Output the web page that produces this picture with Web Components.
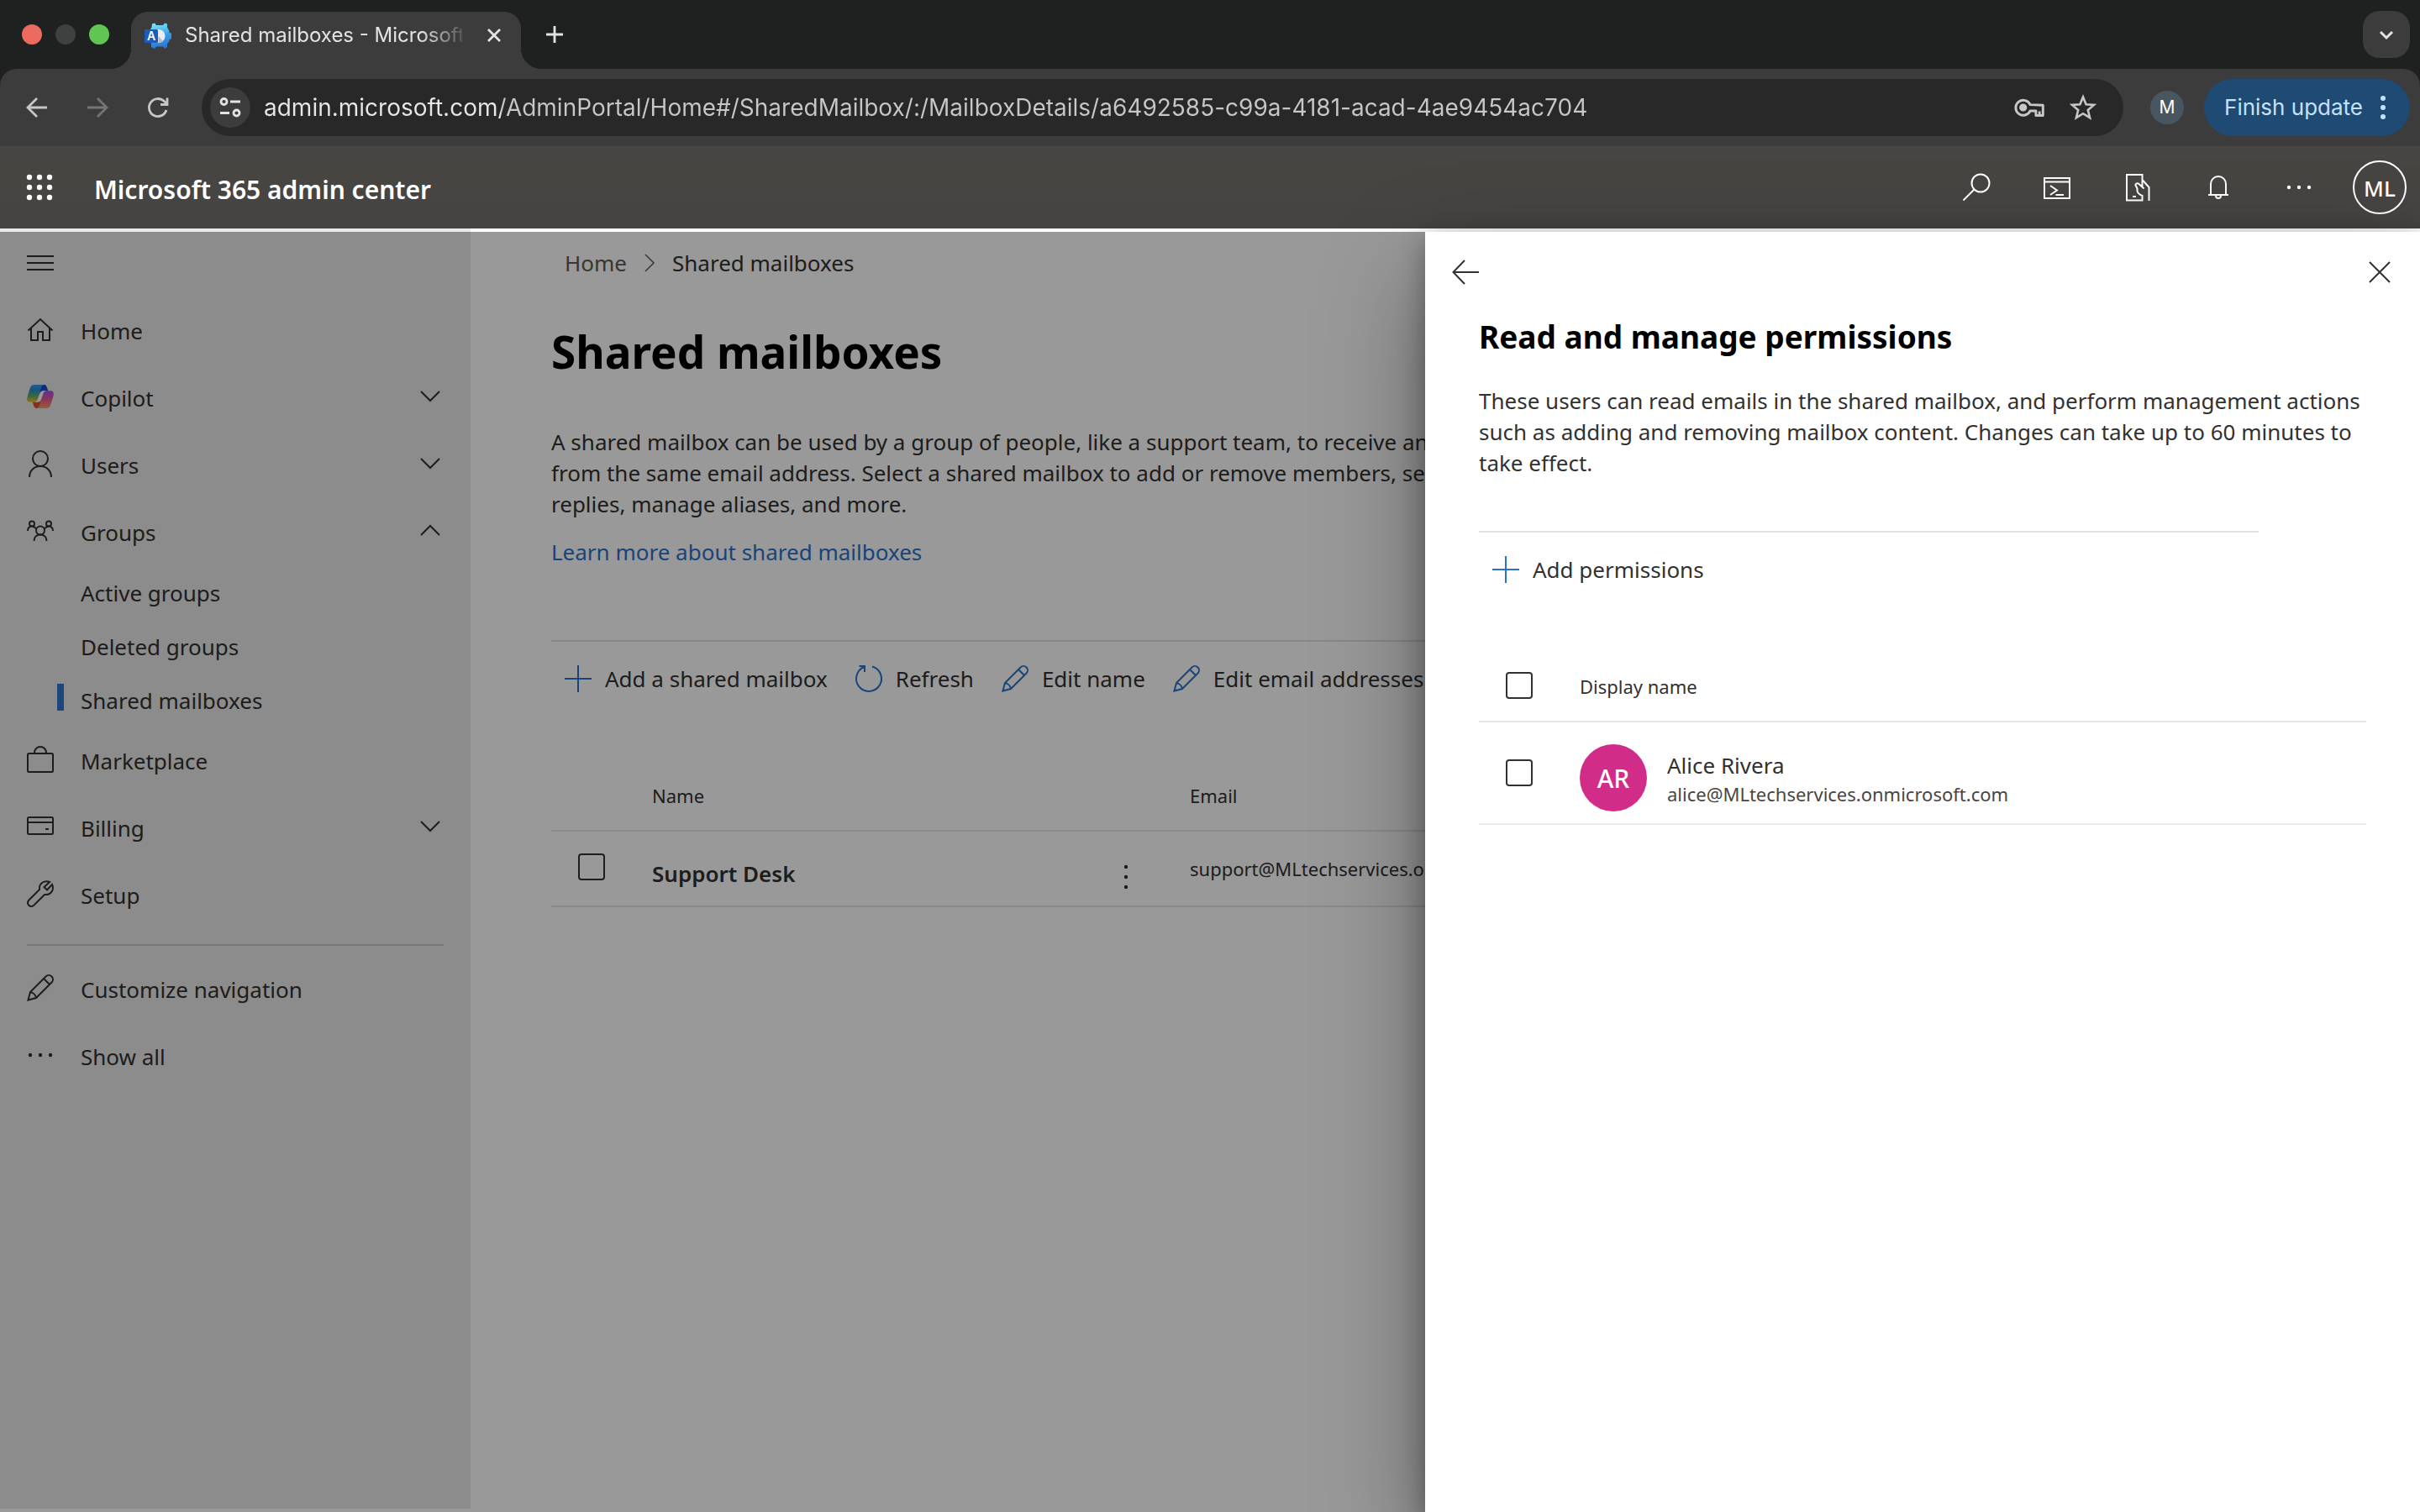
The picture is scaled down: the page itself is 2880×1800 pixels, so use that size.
<!DOCTYPE html>
<html lang="en">
<head>
<meta charset="utf-8">
<title>Shared mailboxes - Microsoft 365 admin center</title>
<style>
  html, body { margin: 0; height: 100%; }
  body {
    --ui: "Inter", sans-serif;
    --text: 26px;
    --small: 22px;
    --line: 37px;
    --ink: #323130;
    --accent: #2b72cc;
    font-family: "Noto Sans", "Open Sans", sans-serif;
    font-size: var(--text);
    line-height: var(--line);
    color: var(--ink);
    background: #1f2120;
    overflow: hidden;
  }
</style>
</head>
<body>
<app-window></app-window>

<script>
const ICONS = {
  menu: '<path d="M0 8H32M0 16H32M0 24H32"/>',
  home: '<path d="M1.5 17.5L16 4l14.500 13.500M5 14.500V29H13V19H19V29H27V14.500"/>',
  copilot: `<defs>
      <linearGradient id="a" x1="0" y1="0" x2="0" y2="1"><stop offset="0" stop-color="#2f9ff0"/><stop offset=".3" stop-color="#2b8bd6"/><stop offset=".65" stop-color="#5fae62"/><stop offset="1" stop-color="#f2c81e"/></linearGradient>
      <linearGradient id="b" x1="0" y1="0" x2="0" y2="1"><stop offset="0" stop-color="#a44cf0"/><stop offset=".5" stop-color="#e85a94"/><stop offset="1" stop-color="#ff9a58"/></linearGradient>
      <linearGradient id="c" x1="0" y1="0" x2="1" y2="1"><stop offset="0" stop-color="#1c3fd0"/><stop offset="1" stop-color="#1858c8"/></linearGradient></defs>
    <g stroke="none"><path fill="url(#c)" d="M14 2h6c3 0 3.600 2 4.500 5l1 2.500h-7L13 16z"/>
    <path fill="#e0502c" d="M18 30h-6c-3 0-3.600-2-4.500-5l-1-2.500h7L19 16z"/>
    <path fill="url(#a)" d="M9 2h11.500C18.500 2.500 17.500 4 16.800 6.500L13 19c-.8 2.600-2 3.800-4.500 3.800H4C.8 22.800-.4 20.500.4 17L3.600 6.500C4.500 3.500 6 2 9 2z"/>
    <path fill="url(#b)" d="M23 30H11.500c2-.5 3-2 3.700-4.500L19 13c.8-2.600 2-3.800 4.500-3.800H28c3.200 0 4.400 2.300 3.600 5.800L28.400 25.500C27.500 28.500 26 30 23 30z"/>
    <path fill="#fff" d="M20.500 9.300h2.500c-2 .4-3.200 1.500-4 4l-2 6.200c-.8 2.300-2 3.200-5.500 3.300H9c2.200-.3 3.300-1.500 4-3.800l2.200-6.500c.9-2.400 2.300-3.200 5.300-3.200z"/></g>`,
  user: '<circle cx="16" cy="10" r="9"/><path d="M3 32C3 24 9 19 16 19s13 5 13 13"/>',
  group: '<circle cx="16" cy="15.500" r="5"/><path d="M8.500 28c0-4.500 3-7.500 7.500-7.500s7.500 3 7.500 7.500"/><circle cx="6" cy="7.500" r="3"/><circle cx="26" cy="7.500" r="3"/><path d="M1 16c0-3.500 2-5.500 5-5.500 2 0 3.500 1 5 3M31 16c0-3.500-2-5.500-5-5.500-2 0-3.500 1-5 3"/>',
  bag: '<rect x="1" y="9" width="30" height="22" rx="1.500"/><path d="M9 9V8a7 7 0 0 1 14 0v1"/>',
  card: '<rect x="1" y="5" width="30" height="20" rx="1.500"/><path d="M1 11H31M22 19h4"/>',
  wrench: '<path d="M27 2C21-.5 14 3.500 15 11L2.500 23.500C-1.500 28 4 33.500 8.500 29.500L21 17c7.500 1 12-6 9-12l-6 6.500L20.500 8z"/>',
  pencil: '<path d="M1.500 30.500L4 21 22.500 2.500c2-2 5-2 7 0s2 5 0 7L11 28zM20 5l7 7M4 21c3.500.5 6.500 3.500 7 7"/>',
  dots: '<g fill="currentColor" stroke="none"><circle cx="4" cy="16" r="2.200"/><circle cx="16" cy="16" r="2.200"/><circle cx="28" cy="16" r="2.200"/></g>',
  kebab: '<g fill="currentColor" stroke="none"><circle cx="16" cy="4" r="2.200"/><circle cx="16" cy="16" r="2.200"/><circle cx="16" cy="28" r="2.200"/></g>',
  down: '<path d="M5 10L16 21 27 10"/>',
  up: '<path d="M5 21L16 10 27 21"/>',
  crumb: '<path d="M11 6l10 10-10 10" stroke-width="1.500"/>',
  plus: '<path d="M0 16H32M16 0V32"/>',
  refresh: '<path d="M20 1.500A15 15 0 1 1 10.500 2M4.500 1H11V8"/>',
  back: '<path d="M32 16H2M15 2L1.500 16 15 30"/>',
  close: '<path d="M4 4L28 28M28 4L4 28"/>',
  search: '<circle cx="21" cy="11" r="10.500"/><path d="M13.500 18.500L.5 31.500"/>',
  shell: '<path d="M1 5H31V29H1zM1 9.500H31M8 14l8 5.500L8 25M14.500 25H24"/>',
  phone: '<path d="M23.500 17.500L17.500 12c-2.500-2-5 .5-3.500 2.500l1.500 3V20c.2 3.200 2.500 4.500 6 6V31.500H3V1H21.500V16M21.500 7L29.500 16V32M10 27h4"/>',
  bell: '<path d="M7 25V12a9 9 0 0 1 18 0V25M4 25H28M13 26a3 3 0 0 0 6 0"/>',
  waffle: '<g fill="currentColor" stroke="none"><circle cx="3" cy="4" r="3.200"/><circle cx="15" cy="4" r="3.200"/><circle cx="27" cy="4" r="3.200"/><circle cx="3" cy="16" r="3.200"/><circle cx="15" cy="16" r="3.200"/><circle cx="27" cy="16" r="3.200"/><circle cx="3" cy="28" r="3.200"/><circle cx="15" cy="28" r="3.200"/><circle cx="27" cy="28" r="3.200"/></g>',
  navback: '<path d="M28 16H6M16 5L5 16 16 27" stroke-width="2.800"/>',
  navforward: '<path d="M4 16H26M16 5l11 11-11 11" stroke-width="2.800"/>',
  reload: '<path d="M26 19a10.500 10.500 0 1 1-2.600-10.400L26 11M27 4.500V12.500H19" stroke-width="2.800"/>',
  tabplus: '<path d="M6 16H26M16 6V26" stroke-width="2.800"/>',
  tabclose: '<path d="M9 9L23 23M23 9L9 23" stroke-width="2.800"/>',
  tabdown: '<path d="M9 13l7 7 7-7" stroke-width="3"/>',
  tune: '<g stroke-width="2.800"><circle cx="8.500" cy="9" r="3.500"/><path d="M16 9H28M4 22.500H15"/><circle cx="23.500" cy="22.500" r="3.500"/></g>',
  key: '<g stroke-width="2.600"><path d="M17 13A8 8 0 1 0 17 19.500H23V24.500H30.500V13.500z" stroke-linejoin="round"/><circle cx="9.500" cy="16" r="2.800" fill="currentColor"/><path d="M26.800 24V20"/></g>',
  star: '<path d="M16 3.500l3.600 8.700 9.400.7-7.200 6.100 2.300 9.200-8.100-5-8.100 5 2.300-9.200L3 12.900l9.400-.7z" stroke-width="2.600"/>',
  more: '<g fill="currentColor" stroke="none"><circle cx="16" cy="5" r="3"/><circle cx="16" cy="16" r="3"/><circle cx="16" cy="27" r="3"/></g>',
  favicon: `<defs><linearGradient id="g" gradientUnits="userSpaceOnUse" x1="14" y1="2" x2="22" y2="32"><stop offset="0" stop-color="#7fe0fb"/><stop offset=".5" stop-color="#39a0e6"/><stop offset="1" stop-color="#2a6fd0"/></linearGradient></defs>
    <g stroke="none"><path fill="url(#g)" d="M9 2.500l3-1 2 2.500h8l2-2.500 3 1v4l2.500 4.500v2l2.500.500v7l-2.500.500v2L27 26v4l-3 2-2-2.500h-8L12 32l-4-2v-4l-2.500-4V11L8.500 6.500z"/>
    <circle cx="16.500" cy="17" r="8" fill="#e8edf2"/><path fill="#b3bdc8" d="M16.500 17l5.600 5.700A8 8 0 0 1 16.500 25z"/>
    <rect x="0" y="9" width="16" height="16" rx="1.500" fill="#1d5cb8"/></g>
    <text x="8" y="22" text-anchor="middle" font-family="Inter, sans-serif" font-size="14" font-weight="600" fill="#fff" stroke="none">A</text>`
};

const RESET = `
  *, *::before, *::after { box-sizing: border-box; }
  button { font: inherit; color: inherit; background: none; border: 0; padding: 0; margin: 0; text-align: left; }
  h1, h2, p, ul, ol { margin: 0; padding: 0; list-style: none; }
  a { color: inherit; text-decoration: none; }
  input[type=checkbox] { appearance: none; display: block; width: 32px; height: 32px; margin: 0; border: 2px solid #323130; border-radius: 4px; }
  table { border-collapse: separate; border-spacing: 0; table-layout: fixed; width: 100%; }
  th, td { padding: 0; text-align: left; font-weight: 400; border-bottom: 2px solid #e6e6e6; vertical-align: middle; }
`;

function component(name, css, html) {
  customElements.define(name, class extends HTMLElement {
    constructor() {
      super();
      this.attachShadow({ mode: "open" });
    }
    connectedCallback() {
      const markup = typeof html === "function" ? html(this) : html;
      this.shadowRoot.innerHTML = `<style>${RESET}${css}</style>${markup}`;
    }
  });
}

component("ui-icon", `
  :host { display: block; flex: none; width: 32px; height: 32px; }
  svg { display: block; width: 100%; height: 100%; overflow: visible; }
`, el => `<svg viewBox="0 0 32 32" fill="none" stroke="currentColor" stroke-width="2" aria-hidden="true">${ICONS[el.getAttribute("name")]}</svg>`);

component("tab-strip", `
  :host { display: flex; align-items: center; height: 82px; padding: 0 12px 0 26px; font-family: var(--ui); font-size: 24px; line-height: 32px; color: #e3e3e3; background: #1f2120; }
  .lights { display: flex; gap: 16px; }
  .lights i { width: 24px; height: 24px; border-radius: 50%; background: #ed6a5e; }
  .lights i:nth-child(2) { background: #3f4140; }
  .lights i:nth-child(3) { background: #61c554; }
  .tab { position: relative; align-self: flex-end; display: flex; align-items: center; width: 464px; height: 68px; margin: 0 24px 0 26px; padding: 0 16px 12px; background: #3c3c3c; border-radius: 20px 20px 0 0; }
  .tab::before, .tab::after { content: ""; position: absolute; bottom: 0; width: 24px; height: 24px; }
  .tab::before { right: 100%; background: radial-gradient(circle at 0 0, transparent 24px, #3c3c3c 24px); }
  .tab::after { left: 100%; background: radial-gradient(circle at 100% 0, transparent 24px, #3c3c3c 24px); }
  .title { flex: 1; margin: 0 22px 0 16px; overflow: hidden; white-space: nowrap; -webkit-mask: linear-gradient(90deg, #000 85%, transparent 103%); mask: linear-gradient(90deg, #000 85%, transparent 103%); }
  .list { display: grid; place-items: center; width: 56px; height: 56px; margin-left: auto; border-radius: 20px; background: #3c3c3c; }
`, `
  <div class="lights"><i></i><i></i><i></i></div>
  <div class="tab"><ui-icon name="favicon"></ui-icon><span class="title">Shared mailboxes - Microsoft</span>
    <button aria-label="Close tab"><ui-icon name="tabclose"></ui-icon></button></div>
  <button aria-label="New tab"><ui-icon name="tabplus"></ui-icon></button>
  <button class="list" aria-label="Search tabs"><ui-icon name="tabdown"></ui-icon></button>
`);

component("address-bar", `
  :host { display: flex; align-items: center; height: 92px; padding: 0 12px 0 28px; font-family: var(--ui); font-size: 26px; line-height: 36px; color: #c7c7c7; background: #3c3c3c; border-radius: 20px 20px 0 0; }
  .nav { display: flex; gap: 40px; margin-right: 36px; }
  .nav [disabled] { color: #757575; }
  .url { flex: 1; display: flex; align-items: center; height: 68px; padding: 0 32px 0 10px; border-radius: 34px; background: #282828; }
  .site { display: grid; place-items: center; width: 48px; height: 48px; border-radius: 50%; background: #3c3c3c; color: #e3e3e3; }
  input { flex: 1; min-width: 0; height: 48px; margin: 0 0 0 16px; padding: 0; border: 0; outline: 0; font: inherit; font-size: 28px; color: #c7c7c7; -webkit-text-fill-color: transparent; background: linear-gradient(90deg, #e8e8e8 282px, #c7c7c7 282px); -webkit-background-clip: text; background-clip: text; }
  .actions { display: flex; align-items: center; gap: 30px; }
  .key { width: 36px; height: 36px; }
  .me { display: grid; place-items: center; width: 40px; height: 40px; margin: 0 24px 0 32px; border-radius: 50%; background: #48565f; color: #fff; font-size: 21px; }
  .update { display: flex; align-items: center; height: 68px; padding: 0 16px 0 24px; gap: 8px; border-radius: 34px; background: #1f4a73; color: #c2e2ff; }
`, `
  <div class="nav">
    <button aria-label="Back"><ui-icon name="navback"></ui-icon></button>
    <button aria-label="Forward" disabled><ui-icon name="navforward"></ui-icon></button>
    <button aria-label="Reload"><ui-icon name="reload"></ui-icon></button>
  </div>
  <div class="url">
    <button class="site" aria-label="Site information"><ui-icon name="tune"></ui-icon></button>
    <input type="text" aria-label="Address" value="admin.microsoft.com/AdminPortal/Home#/SharedMailbox/:/MailboxDetails/a6492585-c99a-4181-acad-4ae9454ac704">
    <div class="actions">
      <button aria-label="Passwords"><ui-icon class="key" name="key"></ui-icon></button>
      <button aria-label="Bookmark"><ui-icon name="star"></ui-icon></button>
    </div>
  </div>
  <button class="me" aria-label="Profile">M</button>
  <button class="update">Finish update <ui-icon name="more"></ui-icon></button>
`);

component("admin-header", `
  :host { display: flex; align-items: center; height: 98px; padding: 0 0 0 32px; color: #fff; background: linear-gradient(#474643, #454442); }
  .title { margin-left: 48px; padding-top: 4px; font-size: 30px; font-weight: 600; }
  .tools { display: flex; margin-left: auto; }
  .tools button { display: grid; place-items: center; width: 96px; height: 96px; }
  .me { width: 64px; height: 64px; padding-top: 2px; border: 2px solid #fff; border-radius: 50%; display: grid; place-items: center; font-size: 26px; font-weight: 500; }
`, `
  <button aria-label="App launcher"><ui-icon name="waffle"></ui-icon></button>
  <span class="title">Microsoft 365 admin center</span>
  <div class="tools">
    <button aria-label="Search"><ui-icon name="search"></ui-icon></button>
    <button aria-label="Cloud Shell"><ui-icon name="shell"></ui-icon></button>
    <button aria-label="Mobile app"><ui-icon name="phone"></ui-icon></button>
    <button aria-label="Notifications"><ui-icon name="bell"></ui-icon></button>
    <button aria-label="More"><ui-icon name="dots"></ui-icon></button>
    <button aria-label="Account"><span class="me">ML</span></button>
  </div>
`);

component("nav-item", `
  :host { display: block; }
  a { display: flex; align-items: center; height: 80px; padding: 0 32px; }
  ui-icon { margin-bottom: 4px; }
  span { flex: 1; padding-left: 32px; }
  :host([sub]) a { height: 64px; }
  :host([sub]) span { padding-left: 64px; }
  :host([current]) a { position: relative; }
  :host([current]) a::before { content: ""; position: absolute; left: 68px; top: 12px; width: 8px; height: 32px; background: #2f77cc; }
`, el => {
  const icon = el.getAttribute("icon"), chevron = el.getAttribute("chevron");
  return `<a href="#">${icon ? `<ui-icon name="${icon}"></ui-icon>` : ""}<span><slot></slot></span>${chevron ? `<ui-icon name="${chevron}"></ui-icon>` : ""}</a>`;
});

component("side-nav", `
  :host { display: flex; flex-direction: column; width: 560px; flex: none; margin-bottom: 4px; background: #e9e9e9; }
  .toggle { display: flex; align-items: center; height: 82px; padding-left: 32px; }
  hr { width: 496px; height: 2px; margin: 18px 32px 12px; border: 0; background: #c8c8c8; }
`, `
  <button class="toggle" aria-label="Collapse navigation"><ui-icon name="menu"></ui-icon></button>
  <nav>
    <nav-item icon="home">Home</nav-item>
    <nav-item icon="copilot" chevron="down">Copilot</nav-item>
    <nav-item icon="user" chevron="down">Users</nav-item>
    <nav-item icon="group" chevron="up">Groups</nav-item>
    <nav-item sub>Active groups</nav-item>
    <nav-item sub>Deleted groups</nav-item>
    <nav-item sub current>Shared mailboxes</nav-item>
    <nav-item icon="bag">Marketplace</nav-item>
    <nav-item icon="card" chevron="down">Billing</nav-item>
    <nav-item icon="wrench">Setup</nav-item>
    <hr>
    <nav-item icon="pencil">Customize navigation</nav-item>
    <nav-item icon="dots">Show all</nav-item>
  </nav>
`);

component("command-button", `
  :host { display: block; flex: none; }
  button { display: flex; align-items: center; gap: 16px; height: 88px; padding: 0 17px 0 16px; white-space: nowrap; }
  ui-icon { color: var(--accent); }
`, el => `<button><ui-icon name="${el.getAttribute("icon")}"></ui-icon><span><slot></slot></span></button>`);

component("command-bar", `
  :host { display: flex; border-top: 2px solid #e1e1e1; overflow: hidden; }
`, `<slot></slot>`);

component("mailbox-table", `
  :host { display: block; margin-top: 54px; font-size: var(--small); }
  th { height: 84px; }
  td { height: 90px; }
  .check { width: 120px; padding-left: 32px; }
  .name { width: 548px; }
  .menu { width: 92px; }
  td.check { padding-bottom: 4px; }
  td.name { padding-top: 12px; font-size: var(--text); font-weight: 600; }
  td.menu { padding-top: 20px; }
  td button { display: block; }
`, `
  <table>
    <thead><tr><th class="check"></th><th class="name">Name</th><th class="menu"></th><th>Email</th></tr></thead>
    <tbody><tr>
      <td class="check"><input type="checkbox" aria-label="Select Support Desk"></td>
      <td class="name">Support Desk</td>
      <td class="menu"><button aria-label="More actions"><ui-icon name="kebab"></ui-icon></button></td>
      <td>support@MLtechservices.onmicrosoft.com</td>
    </tr></tbody>
  </table>
`);

component("mailbox-page", `
  :host { display: block; flex: 1; min-width: 0; padding: 22px 96px 0; background: #fff; overflow: hidden; }
  .crumbs { display: flex; align-items: center; height: 38px; padding-left: 16px; }
  .crumbs a { color: #5c5a58; }
  .crumbs ui-icon { margin: 0 11px; color: #605e5c; }
  h1 { margin-top: 51px; font-size: 53px; line-height: 72px; font-weight: 700; color: #000; }
  p { margin-top: 53px; white-space: nowrap; }
  .more { display: block; width: fit-content; margin: 20px 0 86px; color: var(--accent); }
`, `
  <nav class="crumbs" aria-label="Breadcrumb"><a href="#">Home</a><ui-icon name="crumb"></ui-icon><span>Shared mailboxes</span></nav>
  <h1>Shared mailboxes</h1>
  <p>A shared mailbox can be used by a group of people, like a support team, to receive and<br>from the same email address. Select a shared mailbox to add or remove members, set<br>replies, manage aliases, and more.</p>
  <a class="more" href="#">Learn more about shared mailboxes</a>
  <command-bar>
    <command-button icon="plus">Add a shared mailbox</command-button>
    <command-button icon="refresh">Refresh</command-button>
    <command-button icon="pencil">Edit name</command-button>
    <command-button icon="pencil">Edit email addresses</command-button>
  </command-bar>
  <mailbox-table></mailbox-table>
`);

component("member-table", `
  :host { display: block; margin-top: 54px; font-size: var(--small); }
  th { height: 84px; }
  td { height: 122px; border-color: #edebe9; }
  .check { width: 120px; padding-left: 32px; }
  th.check { padding-bottom: 2px; }
  .person { display: flex; align-items: center; gap: 24px; padding-top: 12px; }
  .face { display: grid; place-items: center; width: 80px; height: 80px; border-radius: 50%; background: #d12d88; color: #fff; font-size: 30px; font-weight: 500; }
  .who { padding-top: 4px; }
  .name, .mail { display: block; line-height: 34px; }
  .name { font-size: var(--text); }
  .mail { color: #484644; }
`, `
  <table>
    <thead><tr><th class="check"><input type="checkbox" aria-label="Select all"></th><th>Display name</th></tr></thead>
    <tbody><tr>
      <td class="check"><input type="checkbox" aria-label="Select Alice Rivera"></td>
      <td><div class="person"><span class="face">AR</span><div class="who"><span class="name">Alice Rivera</span><span class="mail">alice@MLtechservices.onmicrosoft.com</span></div></div></td>
    </tr></tbody>
  </table>
`);

component("permissions-panel", `
  :host { display: block; padding: 0 64px; background: #fff; box-shadow: 0 51px 115px rgba(0,0,0,.38), 0 10px 29px rgba(0,0,0,.32); }
  header { display: flex; align-items: center; justify-content: space-between; height: 96px; margin: 0 -32px; }
  h2 { margin-top: 1px; font-size: 37px; line-height: 56px; font-weight: 700; color: #000; }
  p { margin: 30px 0 62px; }
  command-bar { margin-right: 128px; }
`, `
  <header><button aria-label="Back"><ui-icon name="back"></ui-icon></button><button aria-label="Close"><ui-icon name="close"></ui-icon></button></header>
  <h2>Read and manage permissions</h2>
  <p>These users can read emails in the shared mailbox, and perform management actions such as adding and removing mailbox content. Changes can take up to 60 minutes to take effect.</p>
  <command-bar><command-button icon="plus">Add permissions</command-button></command-bar>
  <member-table></member-table>
`);

component("app-window", `
  :host { display: flex; flex-direction: column; height: 100vh; overflow: hidden; }
  main { position: relative; flex: 1; display: flex; min-height: 0; background: #fff; }
  .scrim { position: absolute; inset: 4px 0 0; background: rgba(0,0,0,.4); }
  permissions-panel { position: absolute; top: 4px; right: 0; bottom: 0; width: 1184px; }
`, `
  <tab-strip></tab-strip>
  <address-bar></address-bar>
  <admin-header></admin-header>
  <main>
    <side-nav></side-nav>
    <mailbox-page></mailbox-page>
    <div class="scrim"></div>
    <permissions-panel></permissions-panel>
  </main>
`);
</script>
</body>
</html>
